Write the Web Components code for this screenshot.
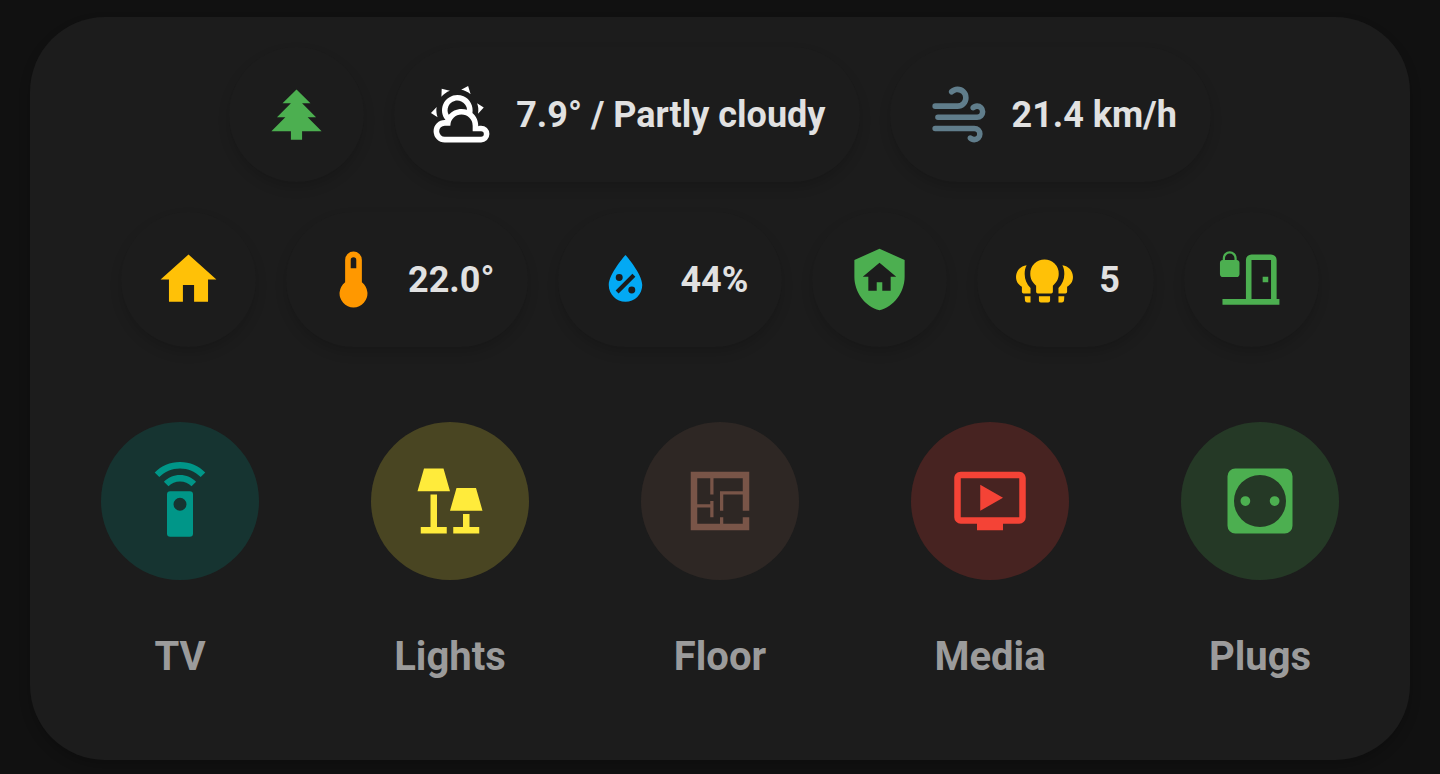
<!DOCTYPE html>
<html lang="en">
<head>
<meta charset="utf-8">
<meta name="viewport" content="width=device-width, initial-scale=1">
<title>Home</title>
<style>
  body { margin: 0; background: #111; color: #e1e1e1; font-family: Roboto, "Noto Sans", sans-serif; }
</style>
</head>
<body>
<home-card>
  <chip-row slot="chips">
    <status-chip icon="pine-tree" label="Garden" style="--tint:#4caf50"></status-chip>
    <status-chip icon="partly-cloudy" style="--tint:#fff">7.9° / Partly cloudy</status-chip>
    <status-chip icon="windy" style="--tint:#607d8b">21.4 km/h</status-chip>
  </chip-row>
  <chip-row slot="chips">
    <status-chip icon="home" label="Home" style="--tint:#ffc107"></status-chip>
    <status-chip icon="thermometer" style="--tint:#ff9800">22.0°</status-chip>
    <status-chip icon="humidity" style="--tint:#03a9f4">44%</status-chip>
    <status-chip icon="shield-home" label="Alarm" style="--tint:#4caf50"></status-chip>
    <status-chip icon="bulbs" style="--tint:#ffc107">5</status-chip>
    <status-chip icon="door-lock" label="Door" style="--tint:#4caf50"></status-chip>
  </chip-row>
  <room-tile icon="remote" style="--tint:#009688">TV</room-tile>
  <room-tile icon="lamps" style="--tint:#ffeb3b">Lights</room-tile>
  <room-tile icon="floor-plan" style="--tint:#795548">Floor</room-tile>
  <room-tile icon="television-play" style="--tint:#f44336">Media</room-tile>
  <room-tile icon="socket" style="--tint:#4caf50">Plugs</room-tile>
</home-card>

<script>
const ICONS = {
  'pine-tree': 'M10,21V18H3L8,13H5L10,8H7L12,3L17,8H14L19,13H16L21,18H14V21H10Z',
  'partly-cloudy': 'M12.74,5.47C15.1,6.5 16.35,9.03 15.92,11.46C17.19,12.56 18,14.19 18,16V16.17C18.31,16.06 18.65,16 19,16A3,3 0 0,1 22,19A3,3 0 0,1 19,22H6A4,4 0 0,1 2,18A4,4 0 0,1 6,14H6.27C5,12.45 4.6,10.24 5.5,8.26C6.72,5.5 9.97,4.24 12.74,5.47M11.93,7.3C10.16,6.5 8.09,7.31 7.31,9.07C6.85,10.09 6.93,11.22 7.41,12.13C8.5,10.83 10.16,10 12,10C12.7,10 13.38,10.12 14,10.34C13.94,9.06 13.18,7.86 11.93,7.3M13.55,3.64C13,3.4 12.45,3.23 11.88,3.12L14.37,1.82L15.27,4.71C14.76,4.29 14.19,3.93 13.55,3.64M6.09,4.44C5.6,4.79 5.17,5.19 4.8,5.63L4.91,2.82L7.87,3.5C7.25,3.71 6.65,4.03 6.09,4.44M18,9.71C17.91,9.12 17.78,8.55 17.59,8L19.97,9.5L17.92,11.73C18.03,11.08 18.05,10.4 18,9.71M3.04,11.3C3.11,11.9 3.24,12.47 3.43,13L1.06,11.5L3.1,9.28C2.97,9.93 2.95,10.61 3.04,11.3M19,18H16V16A4,4 0 0,0 12,12A4,4 0 0,0 8,16H6A2,2 0 0,0 4,18A2,2 0 0,0 6,20H19A1,1 0 0,0 20,19A1,1 0 0,0 19,18Z',
  'windy': 'M4,10A1,1 0 0,1 3,9A1,1 0 0,1 4,8H12A2,2 0 0,0 14,6A2,2 0 0,0 12,4C11.45,4 10.95,4.22 10.59,4.59C10.2,5 9.56,5 9.17,4.59C8.78,4.2 8.78,3.56 9.17,3.17C9.9,2.45 10.9,2 12,2A4,4 0 0,1 16,6A4,4 0 0,1 12,10H4M19,12A1,1 0 0,0 20,11A1,1 0 0,0 19,10C18.72,10 18.47,10.11 18.29,10.29C17.9,10.68 17.27,10.68 16.88,10.29C16.5,9.9 16.5,9.27 16.88,8.88C17.42,8.34 18.17,8 19,8A3,3 0 0,1 22,11A3,3 0 0,1 19,14H5A1,1 0 0,1 4,13A1,1 0 0,1 5,12H19M18,18H4A1,1 0 0,1 3,17A1,1 0 0,1 4,16H18A3,3 0 0,1 21,19A3,3 0 0,1 18,22C17.17,22 16.42,21.66 15.88,21.12C15.5,20.73 15.5,20.1 15.88,19.71C16.27,19.32 16.9,19.32 17.29,19.71C17.47,19.89 17.72,20 18,20A1,1 0 0,0 19,19A1,1 0 0,0 18,18Z',
  'home': 'M10,20V14H14V20H19V12H22L12,3L2,12H5V20H10Z',
  'thermometer': 'M15,13V5A3,3 0 0,0 9,5V13A5,5 0 1,0 15,13M12,4A1,1 0 0,1 13,5V8H11V5A1,1 0 0,1 12,4Z',
  'humidity': 'M12,3.25C12,3.25 6,10 6,14C6,17.32 8.69,20 12,20A6,6 0 0,0 18,14C18,10 12,3.25 12,3.25M14.47,9.97L15.53,11.03L9.53,17.03L8.47,15.97M9.75,10A1.25,1.25 0 0,1 11,11.25A1.25,1.25 0 0,1 9.75,12.5A1.25,1.25 0 0,1 8.5,11.25A1.25,1.25 0 0,1 9.75,10M14.25,14.5A1.25,1.25 0 0,1 15.5,15.75A1.25,1.25 0 0,1 14.25,17A1.25,1.25 0 0,1 13,15.75A1.25,1.25 0 0,1 14.25,14.5Z',
  'shield-home': 'M11,13H13V16H16V11H18L12,6L6,11H8V16H11V13M12,1L21,5V11C21,16.55 17.16,21.74 12,23C6.84,21.74 3,16.55 3,11V5L12,1Z',
  'bulbs': 'M12,4.8A5.1,5.1 0 0,0 6.9,9.9C6.9,11.9 7.8,13.1 9,14.2V16.4A.6,.6 0 0,0 9.6,17H14.4A.6,.6 0 0,0 15,16.4V14.2C16.2,13.1 17.1,11.9 17.1,9.9A5.1,5.1 0 0,0 12,4.8M10,18H14V19.5A.7,.7 0 0,1 13.3,20.2H10.7A.7,.7 0 0,1 10,19.5ZM5.6,6.9C3.4,7.2 1.8,8.9 1.8,11.1C1.8,12.8 2.7,13.9 3.9,14.6V16.4A.6,.6 0 0,0 4.5,17H7V15C5.6,13.6 4.9,12 4.9,10C4.9,8.8 5.1,7.8 5.6,6.9M4.9,18H7V20.2H5.8A.8,.8 0 0,1 5,19.5ZM18.4,6.9C20.6,7.2 22.2,8.9 22.2,11.1C22.2,12.8 21.3,13.9 20.1,14.6V16.4A.6,.6 0 0,1 19.5,17H17V15C18.4,13.6 19.1,12 19.1,10C19.1,8.8 18.9,7.8 18.4,6.9M19.1,18H17V20.2H18.2A.8,.8 0 0,0 19,19.5Z',
  'door-lock': 'M16,11H18V13H16ZM12,3H19A2,2 0 0,1 21,5V19H22V21H1.6V19H10V5A2,2 0 0,1 12,3M12,5V19H19V5ZM1.7,5V4.4A2.5,2.5 0 0,1 6.7,4.4V5A1.1,1.1 0 0,1 7.7,6.1V10A1.1,1.1 0 0,1 6.6,11.1H1.8A1.1,1.1 0 0,1 .7,10V6.1A1.1,1.1 0 0,1 1.7,5M2.5,5H5.9V4.4A1.7,1.7 0 0,0 2.5,4.4Z',
  'remote': 'M12,0C8.96,0 6.21,1.23 4.22,3.22L5.63,4.63C7.26,3 9.5,2 12,2C14.5,2 16.74,3 18.36,4.64L19.77,3.23C17.79,1.23 15.04,0 12,0M7.05,6.05L8.46,7.46C9.37,6.56 10.62,6 12,6C13.38,6 14.63,6.56 15.54,7.46L16.95,6.05C15.68,4.78 13.93,4 12,4C10.07,4 8.32,4.78 7.05,6.05M12,15A2,2 0 0,1 10,13A2,2 0 0,1 12,11A2,2 0 0,1 14,13A2,2 0 0,1 12,15M15,9H9A1,1 0 0,0 8,10V22A1,1 0 0,0 9,23H15A1,1 0 0,0 16,22V10A1,1 0 0,0 15,9Z',
  'lamps': 'M4,2H10L12,9H2ZM6,10H8V20H11V22H3V20H6ZM14,8H20L22,15H12ZM16,16H18V20H21V22H13V20H16Z',
  'floor-plan': 'M3,3H21V15H19V10H13V15H12V9H19V5H10V10H9V5H5V13H9V12H10V17H9V14H5V19H12V17H13V19H19V17H21V21H3Z',
  'television-play': 'M21,3H3C1.89,3 1,3.89 1,5V17A2,2 0 0,0 3,19H8V21H16V19H21A2,2 0 0,0 23,17V5C23,3.89 22.1,3 21,3M21,17H3V5H21M16,11L9,15V7Z',
  'socket': 'M4.4,2H19.6A2.4,2.4 0 0,1 22,4.4V19.6A2.4,2.4 0 0,1 19.6,22H4.4A2.4,2.4 0 0,1 2,19.6V4.4A2.4,2.4 0 0,1 4.4,2M12,4A8,8 0 1,0 12,20A8,8 0 1,0 12,4M7.5,10.5A1.5,1.5 0 1,1 7.5,13.5A1.5,1.5 0 1,1 7.5,10.5M16.5,10.5A1.5,1.5 0 1,1 16.5,13.5A1.5,1.5 0 1,1 16.5,10.5Z'
};

/* A 24-unit glyph, filled with the inherited text colour. */
customElements.define('glyph-icon', class extends HTMLElement {
  connectedCallback() {
    if (this.shadowRoot) return;
    this.attachShadow({ mode: 'open' }).innerHTML = `
      <style>
        :host { display: block; flex: none; }
        svg { display: block; width: 100%; height: 100%; fill: currentColor; }
      </style>
      <svg viewBox="0 0 24 24" aria-hidden="true"><path fill-rule="evenodd" d="${ICONS[this.getAttribute('name')]}"/></svg>`;
  }
});

customElements.define('status-chip', class extends HTMLElement {
  connectedCallback() {
    if (this.shadowRoot) return;
    const label = this.getAttribute('label');
    this.attachShadow({ mode: 'open' }).innerHTML = `
      <style>
        :host { display: block; }
        button {
          display: flex; align-items: center; gap: 21px;
          padding: 34px; border: 0; border-radius: 68px;
          background: #1c1c1c; color: inherit; cursor: pointer;
          font: 700 36px/44px Roboto, "Noto Sans", sans-serif; white-space: nowrap;
          box-shadow: 0 6px 12px rgba(0, 0, 0, .15);
        }
        glyph-icon { width: 67px; height: 67px; color: var(--tint); }
      </style>
      <button type="button"${label ? ` aria-label="${label}"` : ''}>
        <glyph-icon name="${this.getAttribute('icon')}"></glyph-icon>${label ? '' : '<span><slot></slot></span>'}
      </button>`;
  }
});

customElements.define('chip-row', class extends HTMLElement {
  connectedCallback() {
    if (this.shadowRoot) return;
    this.attachShadow({ mode: 'open' }).innerHTML = `
      <style>
        :host { display: flex; flex-wrap: wrap; justify-content: center; gap: 30px; }
      </style>
      <slot></slot>`;
  }
});

customElements.define('room-tile', class extends HTMLElement {
  connectedCallback() {
    if (this.shadowRoot) return;
    this.attachShadow({ mode: 'open' }).innerHTML = `
      <style>
        :host { display: flex; justify-content: center; }
        button {
          display: flex; flex-direction: column; align-items: center; gap: 53px;
          padding: 0; border: 0; background: none; color: #9b9b9b; cursor: pointer;
          font: 700 40px/48px Roboto, "Noto Sans", sans-serif;
        }
        .disc {
          display: grid; place-items: center; width: 158px; height: 158px; border-radius: 50%;
          color: var(--tint); background: color-mix(in srgb, var(--tint) 20%, transparent);
        }
        glyph-icon { width: 78px; height: 78px; }
      </style>
      <button type="button">
        <span class="disc"><glyph-icon name="${this.getAttribute('icon')}"></glyph-icon></span>
        <span><slot></slot></span>
      </button>`;
  }
});

customElements.define('home-card', class extends HTMLElement {
  connectedCallback() {
    if (this.shadowRoot) return;
    this.attachShadow({ mode: 'open' }).innerHTML = `
      <style>
        :host {
          display: block; margin: 17px 30px 14px; padding: 30px 15px 79px;
          border-radius: 75px; background: #1c1c1c;
          box-shadow: 0 6px 12px rgba(0, 0, 0, .2);
        }
        .chips { display: grid; gap: 30px; }
        .rooms { display: grid; grid-template-columns: repeat(5, 1fr); margin-top: 75px; }
      </style>
      <div class="chips"><slot name="chips"></slot></div>
      <div class="rooms"><slot></slot></div>`;
  }
});
</script>
</body>
</html>
